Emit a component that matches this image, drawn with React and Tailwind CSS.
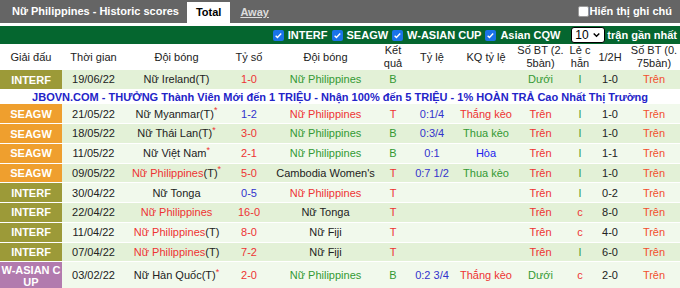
import { useState } from "react";

const RED = "text-[#ee3333]";
const GREEN = "text-[#339933]";
const BLUE = "text-[#3333cc]";
const BLACK = "text-[#222222]";
const ORANGE = "text-[#f2502e]";

const leagueBg = {
  INTERF: "bg-[#9c9a38]",
  SEAGW: "bg-[#ef9f2e]",
  WASIAN: "bg-[#b27bae]",
};

const rows = [
  {
    lg: "INTERF", date: "19/06/22",
    home: [["Nữ Ireland(T)", BLACK]], score: ["1-0", RED],
    away: ["Nữ Philippines", GREEN], res: ["B", GREEN],
    hc: "", hcr: ["", ""], ou: ["Dưới", GREEN], oe: ["l", GREEN], ht: "1-0",
  },
  {
    lg: "SEAGW", date: "21/05/22",
    home: [["Nữ Myanmar(T)", BLACK], ["*", RED]], score: ["1-2", BLUE],
    away: ["Nữ Philippines", RED], res: ["T", RED],
    hc: "0:1/4", hcr: ["Thắng kèo", RED], ou: ["Trên", RED], oe: ["l", GREEN], ht: "1-0",
  },
  {
    lg: "SEAGW", date: "18/05/22",
    home: [["Nữ Thái Lan(T)", BLACK], ["*", RED]], score: ["3-0", RED],
    away: ["Nữ Philippines", GREEN], res: ["B", GREEN],
    hc: "0:3/4", hcr: ["Thua kèo", GREEN], ou: ["Trên", RED], oe: ["l", GREEN], ht: "1-0",
  },
  {
    lg: "SEAGW", date: "11/05/22",
    home: [["Nữ Việt Nam", BLACK], ["*", RED]], score: ["2-1", RED],
    away: ["Nữ Philippines", GREEN], res: ["B", GREEN],
    hc: "0:1", hcr: ["Hòa", "text-[#2222ee]"], ou: ["Trên", RED], oe: ["l", GREEN], ht: "1-1",
  },
  {
    lg: "SEAGW", date: "09/05/22",
    home: [["Nữ Philippines", RED], ["(T)", BLACK], ["*", RED]], score: ["5-0", RED],
    away: ["Cambodia Women's", BLACK], res: ["T", RED],
    hc: "0:7 1/2", hcr: ["Thua kèo", GREEN], ou: ["Trên", RED], oe: ["l", GREEN], ht: "1-0",
  },
  {
    lg: "INTERF", date: "30/04/22",
    home: [["Nữ Tonga", BLACK]], score: ["0-5", BLUE],
    away: ["Nữ Philippines", RED], res: ["T", RED],
    hc: "", hcr: ["", ""], ou: ["Trên", RED], oe: ["l", GREEN], ht: "0-2",
  },
  {
    lg: "INTERF", date: "22/04/22",
    home: [["Nữ Philippines", RED]], score: ["16-0", RED],
    away: ["Nữ Tonga", BLACK], res: ["T", RED],
    hc: "", hcr: ["", ""], ou: ["Trên", RED], oe: ["c", RED], ht: "8-0",
  },
  {
    lg: "INTERF", date: "11/04/22",
    home: [["Nữ Philippines", RED], ["(T)", BLACK]], score: ["8-0", RED],
    away: ["Nữ Fiji", BLACK], res: ["T", RED],
    hc: "", hcr: ["", ""], ou: ["Trên", RED], oe: ["c", RED], ht: "4-0",
  },
  {
    lg: "INTERF", date: "07/04/22",
    home: [["Nữ Philippines", RED], ["(T)", BLACK]], score: ["7-2", RED],
    away: ["Nữ Fiji", BLACK], res: ["T", RED],
    hc: "", hcr: ["", ""], ou: ["Trên", RED], oe: ["l", GREEN], ht: "6-0",
  },
  {
    lg: "WASIAN", date: "03/02/22",
    home: [["Nữ Hàn Quốc(T)", BLACK], ["*", RED]], score: ["2-0", RED],
    away: ["Nữ Philippines", GREEN], res: ["B", GREEN],
    hc: "0:2 3/4", hcr: ["Thắng kèo", RED], ou: ["Dưới", GREEN], oe: ["c", RED], ht: "2-0",
  },
];

function Check({ checked = true }) {
  if (!checked) {
    return <span className="inline-block h-[11px] w-[11px] rounded-[2px] border border-[#999] bg-white" />;
  }
  return (
    <span className="inline-flex h-[11px] w-[11px] items-center justify-center rounded-[2px] bg-[#1a73e8]">
      <svg viewBox="0 0 12 12" className="h-[9px] w-[9px]">
        <path d="M2.2 6.3l2.4 2.4 5-5.4" fill="none" stroke="white" strokeWidth="1.8" />
      </svg>
    </span>
  );
}

function Row({ r, dark }) {
  const bg = dark ? "bg-[#e3f1d7]" : "bg-[#f1f9ec]";
  const last = r.lg === "WASIAN";
  return (
    <tr className={`${bg} ${last ? "h-[28px]" : "h-[19.7px]"} border-b border-white text-center`}>
      <td className={`${leagueBg[r.lg]} px-0 font-bold leading-[12px] text-white`}>
        {last ? (
          <>
            W-ASIAN C
            <br />
            UP
          </>
        ) : (
          r.lg
        )}
      </td>
      <td className={BLACK}>{r.date}</td>
      <td className="whitespace-nowrap">
        {r.home.map(([t, c], i) => (
          <span key={i} className={c}>
            {t === "*" ? <sup className="text-[9px]">*</sup> : t}
          </span>
        ))}
      </td>
      <td className={r.score[1]}>{r.score[0]}</td>
      <td className={`whitespace-nowrap ${r.away[1]}`}>{r.away[0]}</td>
      <td className={r.res[1]}>{r.res[0]}</td>
      <td className={BLUE}>{r.hc}</td>
      <td className={r.hcr[1]}>{r.hcr[0]}</td>
      <td className={r.ou[1]}>{r.ou[0]}</td>
      <td className={r.oe[1]}>{r.oe[0] === "l" ? "l" : "c"}</td>
      <td className={BLACK}>{r.ht}</td>
      <td className={ORANGE}>Trên</td>
    </tr>
  );
}

export default function App() {
  const [count] = useState("10");
  const widths = [62, 63, 103, 42, 111, 24, 54, 54, 55, 24, 36, 52];
  return (
    <div className="w-[680px] overflow-hidden bg-white font-['Liberation_Sans',Arial,sans-serif] text-[11px]">
      <div className="flex h-[23px] items-end bg-[#656565]">
        <div className="flex h-full items-center pl-3 font-bold text-white">Nữ Philippines - Historic scores</div>
        <div className="ml-[8px] flex h-[21px] items-center bg-white px-[9px] font-bold text-black">Total</div>
        <div className="flex h-[21px] items-center px-[10px] font-bold text-[#dddddd] underline">Away</div>
        <div className="ml-auto flex h-full items-center gap-[1px] pr-[8px] font-bold text-white">
          <Check checked={false} />
          <span>Hiển thị ghi chú</span>
        </div>
      </div>
      <div className="mt-[3px] flex h-[18px] items-center justify-end gap-[4px] bg-[#05662f] pr-[3px] font-bold text-white">
        <Check />
        <span>INTERF</span>
        <Check />
        <span>SEAGW</span>
        <Check />
        <span>W-ASIAN CUP</span>
        <Check />
        <span>Asian CQW</span>
        <span className="ml-[7px] flex h-[16px] w-[34px] items-center justify-between rounded-[3px] border border-black bg-white px-[3px] font-normal text-black">
          <span className="text-[12px] leading-none">{count}</span>
          <svg viewBox="0 0 10 10" className="h-[8px] w-[9px]">
            <path d="M1.5 3l3.5 3.5L8.5 3" fill="none" stroke="black" strokeWidth="1.8" />
          </svg>
        </span>
        <span className="-ml-[2px]">trận gần nhất</span>
      </div>
      <table className="w-[680px] table-fixed border-collapse">
        <colgroup>
          {widths.map((w, i) => (
            <col key={i} style={{ width: w }} />
          ))}
        </colgroup>
        <thead>
          <tr className="h-[26px] bg-white text-center leading-[13px] text-[#222222]">
            <th className="font-normal">Giải đấu</th>
            <th className="font-normal">Thời gian</th>
            <th className="font-normal">Đội bóng</th>
            <th className="font-normal">Tỷ số</th>
            <th className="font-normal">Đội bóng</th>
            <th className="font-normal">
              Kết
              <br />
              quả
            </th>
            <th className="font-normal">Tỷ lệ</th>
            <th className="font-normal">KQ tỷ lệ</th>
            <th className="font-normal">
              Số BT (2.
              <br />
              5bàn)
            </th>
            <th className="font-normal">
              Lẻ c
              <br />
              hẵn
            </th>
            <th className="font-normal">1/2H</th>
            <th className="font-normal">
              Số BT (0.
              <br />
              75bàn)
            </th>
          </tr>
        </thead>
        <tbody>
          <Row r={rows[0]} dark />
          <tr className="h-[14px] bg-white">
            <td colSpan={12} className="whitespace-nowrap text-center font-bold leading-[14px] text-[#2323c8]">
              JBOVN.COM - THƯỞNG Thành Viên Mới đến 1 TRIỆU - Nhận 100% đến 5 TRIỆU - 1% HOÀN TRẢ Cao Nhất Thị Trường
            </td>
          </tr>
          {rows.slice(1).map((r, i) => (
            <Row key={i} r={r} dark={i % 2 === 1} />
          ))}
        </tbody>
      </table>
    </div>
  );
}
